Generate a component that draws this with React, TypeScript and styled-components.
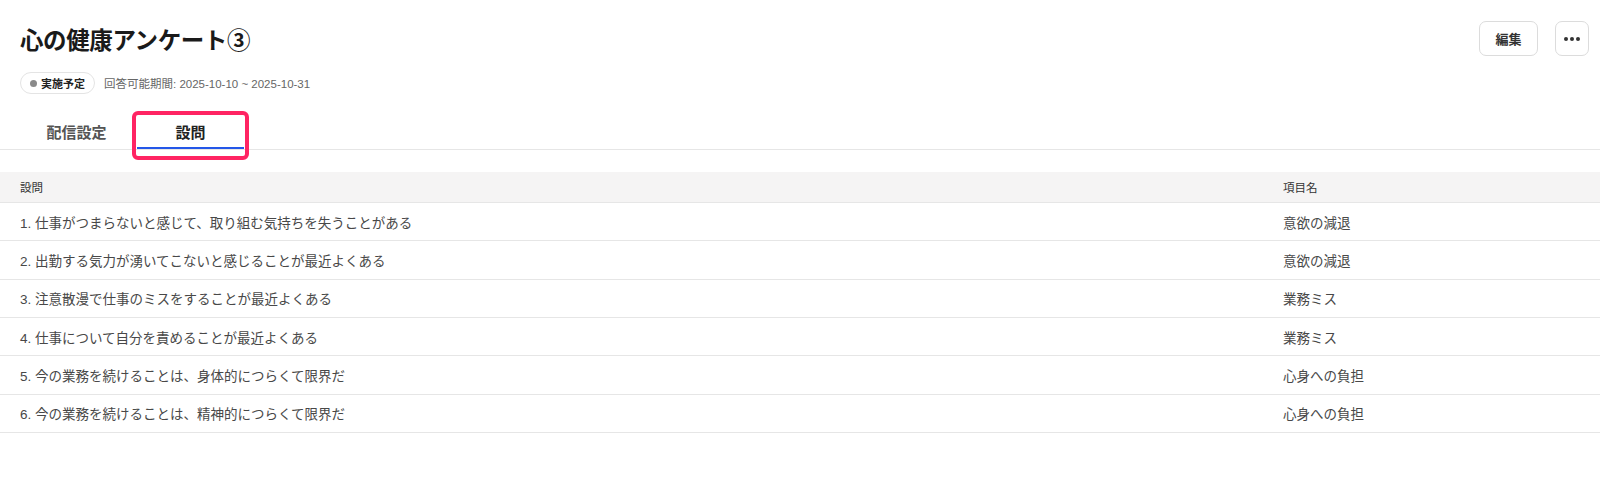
import React from "react";
import styled, { createGlobalStyle } from "styled-components";

const GlobalStyle = createGlobalStyle`
  html, body { margin: 0; padding: 0; background: #fff; }
  body {
    font-family: "Liberation Sans", "Noto Sans CJK JP", sans-serif;
    color: #333;
  }
`;

const Page = styled.div`
  width: 1600px;
  padding-top: 21px;
`;

const HeaderRow = styled.div`
  display: flex;
  align-items: center;
  justify-content: space-between;
  padding: 0 11px 0 20px;
  height: 35px;
`;

const Title = styled.h1`
  margin: 0;
  font-size: 23.5px;
  font-weight: 700;
  color: #1a1a1a;
  letter-spacing: -0.4px;
`;

const Actions = styled.div`
  display: flex;
  gap: 17px;
`;

const OutlineButton = styled.button<{ $square?: boolean }>`
  height: 35px;
  width: ${(p) => (p.$square ? "34px" : "59px")};
  border: 1px solid #dcdcdc;
  border-radius: 7px;
  background: #fff;
  font-family: inherit;
  font-size: 13px;
  font-weight: 700;
  color: #333;
  display: flex;
  align-items: center;
  justify-content: center;
  padding: 0;
  cursor: pointer;
`;

const MetaRow = styled.div`
  display: flex;
  align-items: center;
  gap: 9px;
  padding-left: 20px;
  margin-top: 16px;
`;

const Badge = styled.span`
  display: inline-flex;
  align-items: center;
  gap: 4px;
  height: 22px;
  padding: 0 9px 0 9px;
  border: 1px solid #e4e4e4;
  border-radius: 12px;
  box-sizing: border-box;
  font-size: 11px;
  font-weight: 700;
  color: #222;
`;

const Dot = styled.span`
  width: 7px;
  height: 7px;
  border-radius: 50%;
  background: #8a8a8a;
`;

const Period = styled.span`
  font-size: 11.5px;
  color: #666;
`;

const TabBar = styled.div`
  display: flex;
  gap: 7px;
  padding-left: 23px;
  margin-top: 20px;
  border-bottom: 1px solid #e6e6e6;
`;

const Tab = styled.div<{ $active?: boolean }>`
  position: relative;
  width: 107px;
  height: 35px;
  display: flex;
  align-items: center;
  justify-content: center;
  font-size: 15px;
  font-weight: 700;
  color: ${(p) => (p.$active ? "#222" : "#555")};
  box-sizing: border-box;
  border-bottom: 2px solid ${(p) => (p.$active ? "#2457e8" : "transparent")};
  padding-top: 2px;
`;

const Highlight = styled.span`
  position: absolute;
  left: -5px;
  right: -5px;
  top: -3px;
  bottom: -13px;
  border: 4px solid #ff2463;
  border-radius: 6px;
  pointer-events: none;
`;

const Table = styled.div`
  margin-top: 22px;
`;

const Row = styled.div<{ $head?: boolean }>`
  display: grid;
  grid-template-columns: 1263px 1fr;
  align-items: center;
  height: ${(p) => (p.$head ? "31px" : "38.33px")};
  box-sizing: border-box;
  border-bottom: 1px solid #e6e6e6;
  background: ${(p) => (p.$head ? "#f5f4f4" : "#fff")};
  font-size: ${(p) => (p.$head ? "11.5px" : "13.5px")};
  color: ${(p) => (p.$head ? "#333" : "#484848")};
`;

const Cell = styled.div`
  padding: 0 20px;
  white-space: nowrap;
`;

const MoreIcon = () => (
  <svg width="18" height="6" viewBox="0 0 18 6">
    <circle cx="3" cy="3" r="2" fill="#333" />
    <circle cx="9" cy="3" r="2" fill="#333" />
    <circle cx="15" cy="3" r="2" fill="#333" />
  </svg>
);

const questions: [string, string][] = [
  ["1. 仕事がつまらないと感じて、取り組む気持ちを失うことがある", "意欲の減退"],
  ["2. 出勤する気力が湧いてこないと感じることが最近よくある", "意欲の減退"],
  ["3. 注意散漫で仕事のミスをすることが最近よくある", "業務ミス"],
  ["4. 仕事について自分を責めることが最近よくある", "業務ミス"],
  ["5. 今の業務を続けることは、身体的につらくて限界だ", "心身への負担"],
  ["6. 今の業務を続けることは、精神的につらくて限界だ", "心身への負担"],
];

export default function App() {
  return (
    <>
      <GlobalStyle />
      <Page>
        <HeaderRow>
          <Title>心の健康アンケート③</Title>
          <Actions>
            <OutlineButton>編集</OutlineButton>
            <OutlineButton $square aria-label="more">
              <MoreIcon />
            </OutlineButton>
          </Actions>
        </HeaderRow>
        <MetaRow>
          <Badge>
            <Dot />
            実施予定
          </Badge>
          <Period>回答可能期間: 2025-10-10 ~ 2025-10-31</Period>
        </MetaRow>
        <TabBar>
          <Tab>配信設定</Tab>
          <Tab $active>
            設問
            <Highlight />
          </Tab>
        </TabBar>
        <Table>
          <Row $head>
            <Cell>設問</Cell>
            <Cell>項目名</Cell>
          </Row>
          {questions.map(([q, name]) => (
            <Row key={q}>
              <Cell>{q}</Cell>
              <Cell>{name}</Cell>
            </Row>
          ))}
        </Table>
      </Page>
    </>
  );
}
